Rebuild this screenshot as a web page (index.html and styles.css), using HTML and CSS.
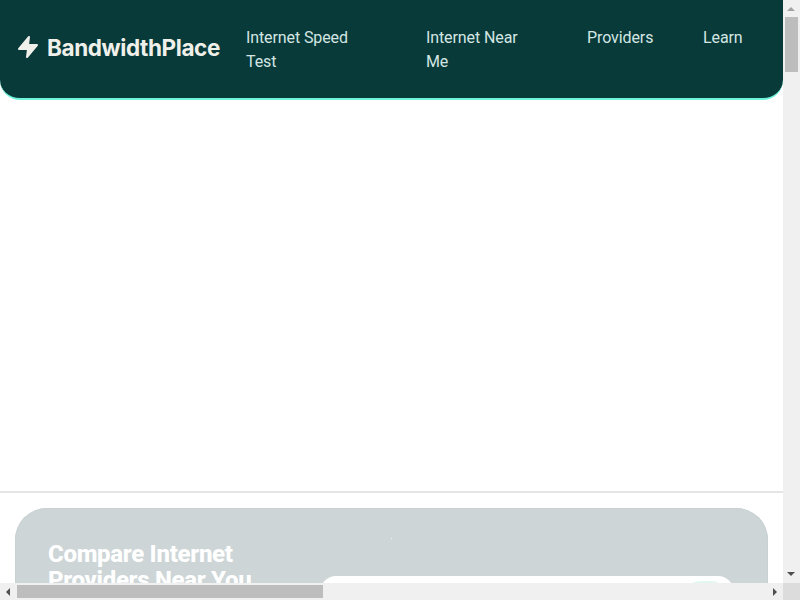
FILE: index.html
```html
<!DOCTYPE html>
<html lang="en">
<head>
<meta charset="utf-8">
<title>BandwidthPlace</title>
<link rel="stylesheet" href="styles.css">
</head>
<body>
<div class="window">
  <div class="viewport">
    <header class="header">
      <a class="logo" href="#">
        <svg class="logo-icon" viewBox="0 0 24 24" aria-hidden="true"><polygon points="13 2 3 14 12 14 11 22 21 10 12 10 13 2"/></svg>
        <span>BandwidthPlace</span>
      </a>
      <nav class="nav">
        <a href="#">Internet Speed Test</a>
        <a href="#">Internet Near Me</a>
        <a href="#">Providers</a>
        <a href="#">Learn</a>
      </nav>
    </header>
    <div class="ad-slot"></div>
    <section class="compare">
      <span class="speck"></span>
      <h2 class="compare-title">Compare Internet Providers Near You</h2>
      <div class="search-card"><span class="search-btn"></span></div>
    </section>
  </div>
  <div class="vbar">
    <span class="arrow arrow-up"></span>
    <span class="vthumb"></span>
    <span class="vtrack"></span>
    <span class="arrow arrow-down"></span>
  </div>
  <div class="hbar">
    <span class="arrow arrow-left"></span>
    <span class="hthumb"></span>
    <span class="htrack"></span>
    <span class="arrow arrow-right"></span>
  </div>
  <div class="corner"></div>
</div>
</body>
</html>
```
FILE: styles.css
```css
* { box-sizing: border-box; }
html, body { margin: 0; height: 100%; overflow: hidden; }
body { font-family: Roboto, "Liberation Sans", sans-serif; background: #fff; }
a { color: inherit; text-decoration: none; }

.window {
  display: grid;
  grid-template-columns: 783px 17px;
  grid-template-rows: 583px 17px;
  width: 800px;
  height: 600px;
}
.viewport { overflow: hidden; background: #fff; }

.header {
  display: flex;
  align-items: flex-start;
  height: 100px;
  padding: 26px 0 0 16px;
  background: #073a39;
  border-bottom: 2px solid #6ef5dc;
  border-radius: 0 0 20px 20px;
}
.logo {
  display: flex;
  align-items: center;
  gap: 7px;
  width: 230px;
  height: 42px;
  color: #f0f0eb;
  font-family: Inter, sans-serif;
  font-size: 22.5px;
  font-weight: 650;
  letter-spacing: -0.4px;
}
.logo-icon { width: 24px; height: 24px; fill: #f0f0eb; stroke: #f0f0eb; stroke-width: 2; stroke-linejoin: round; flex: none; }
.nav {
  display: grid;
  grid-template-columns: 180px 161px 116px auto;
  color: #d4e6e3;
  font-size: 16px;
  line-height: 24px;
  letter-spacing: -0.1px;
}
.nav a { padding-right: 50px; }
.nav a:last-child { padding-right: 0; }

.ad-slot { height: 393px; border-bottom: 2px solid #e5e5e5; }

.compare {
  position: relative;
  display: flex;
  gap: 40px;
  height: 200px;
  margin: 15px 15px 0;
  padding: 33px 33px;
  background: #cdd5d7;
  border-radius: 32px;
  box-shadow: inset 0 0 0 1px #c8d2d3;
}
.compare-title {
  flex: none;
  width: 232px;
  margin: 0;
  color: #fff;
  font-size: 24px;
  font-weight: 800;
  line-height: 26px;
  letter-spacing: -0.3px;
}
.search-card {
  flex: none;
  display: flex;
  justify-content: flex-end;
  width: 414px;
  height: 100px;
  margin-top: 35px;
  padding: 5px 8px 0 0;
  background: #fff;
  border-radius: 16px;
}
.search-btn { width: 40px; height: 40px; background: #e3f7f2; border-radius: 14px; }
.speck { position: absolute; left: 376px; top: 30px; width: 1px; height: 1px; background: #eef2f2; }

.vbar, .hbar { display: flex; background: #f0f0f0; }
.vbar { flex-direction: column; }
.vthumb { width: 13px; height: 55px; margin-left: 2px; background: #bdbdbd; flex: none; }
.vtrack, .htrack { flex: 1; }
.hthumb { width: 306px; height: 13px; margin-top: 2px; background: #bdbdbd; flex: none; }
.corner { background: #dcdcdc; }

.arrow { position: relative; flex: none; width: 17px; height: 17px; }
.arrow::after { content: ""; position: absolute; width: 0; height: 0; border: 4px solid transparent; }
.arrow-up::after { left: 4px; top: 3px; border-bottom-color: #a3a3a3; }
.arrow-down::after { left: 4px; top: 6px; border-top-color: #505050; }
.arrow-left::after { left: 2px; top: 5px; border-right-color: #505050; }
.arrow-right::after { left: 7px; top: 5px; border-left-color: #505050; }
```
